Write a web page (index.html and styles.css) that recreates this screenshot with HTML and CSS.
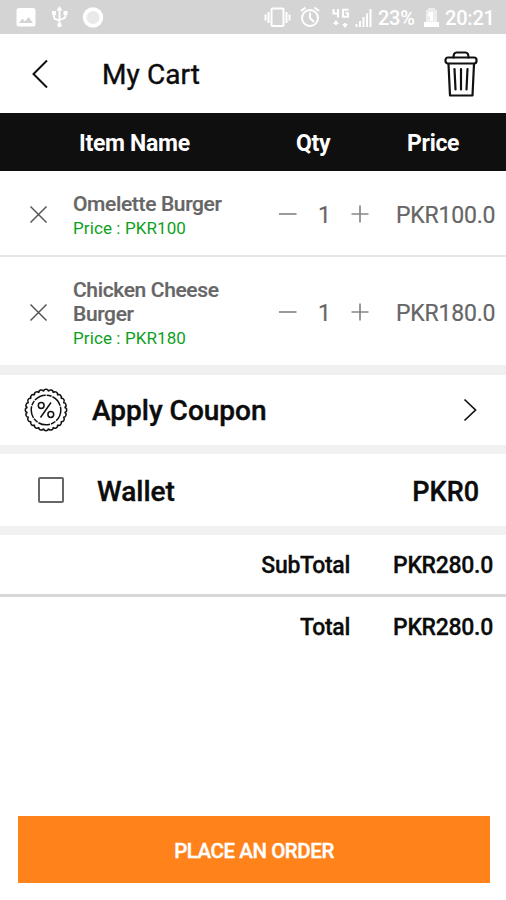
FILE: index.html
```html
<!DOCTYPE html>
<html lang="en">
<head>
<meta charset="utf-8">
<title>My Cart</title>
<link rel="stylesheet" href="styles.css">
</head>
<body>
<div class="status">
  <svg class="status-left" width="110" height="34" viewBox="0 0 110 34">
    <path fill="#fff" fill-rule="evenodd" d="M19 8h14q2.500 0 2.500 2.500v13.500q0 2.500-2.500 2.500h-14q-2.500 0-2.500-2.500v-13.500q0-2.500 2.500-2.500zM19 23h14l-4.500-6-3.500 4.500-2.500-3z"/>
    <g fill="none" stroke="#fff" stroke-width="1.800"><path d="M59.500 9v15M54 13v4q0 2 2.500 2.500l3 1.500M65.500 13v3q0 2-2.500 2.500l-3.500 1.500"/></g>
    <path fill="#fff" d="M59.500 6l3 4.500h-6zM52 11h4v4h-4zM63.500 11h4v4h-4z"/><circle cx="59.500" cy="25" r="2.300" fill="#fff"/>
    <circle cx="93" cy="17.500" r="10.200" fill="#fff"/><circle cx="93" cy="17.500" r="6.500" fill="#e9e9e9"/>
  </svg>
  <div class="status-right">
    <svg width="112" height="34" viewBox="264 0 112 34" fill="none" stroke="#fff" stroke-width="2">
      <rect x="271.500" y="8.500" width="12" height="17.500" rx="1"/><path d="M268.500 12v11M265.500 14.500v6M286.500 12v11M289.500 14.500v6"/>
      <circle cx="310" cy="18" r="8"/><path d="M310 12.500v5.500l4 4M301 11l4.500-3.500M319 11l-4.500-3.500"/>
      <path stroke-width="2" d="M333.500 9v4.500h5.500M338 9v8.500M348.500 9.800h-5.500v7h5v-3.500h-2.500M336 21v4M345 23v4"/>
      <path fill="#fff" stroke="none" d="M333 24l3-4 3 4zM342 24l3 4 3-4z"/>
      <path stroke-width="2" d="M356.500 24v3M360 21v6M363.500 17v10M367 13.500v13.500M370.500 9v18"/>
    </svg>
    <span class="battery">23%</span>
    <svg class="cell" width="15" height="20" viewBox="0 0 15 20"><path fill="#ededed" d="M4 0h7v2h2v17H2V2h2z"/><path fill="#fff" d="M0 14h15v5H0zM5 4h4v9H6V8H4z"/></svg>
    <span class="clock">20:21</span>
  </div>
</div>

<header class="bar">
  <svg class="back" width="18" height="30" viewBox="0 0 18 30" fill="none" stroke="#111" stroke-width="2"><path d="M16 1.500L2.500 15l13.500 13.500"/></svg>
  <h1>My Cart</h1>
  <svg class="trash" width="34" height="46" viewBox="0 0 34 46" fill="none" stroke="#111" stroke-width="2.200" stroke-linejoin="round" stroke-linecap="round">
    <path d="M9.500 6.500q0-5 3-5h9q3 0 3 5"/><rect x="1.500" y="6.500" width="31" height="6" rx="2.500"/><path d="M4.500 13l1.500 31.500h22.500L30 13"/><path d="M10.500 18l1 20.500M17 18v20.500M23.500 18l-1 20.500"/>
  </svg>
</header>

<div class="line head"><span class="h-name">Item Name</span><span class="h-qty">Qty</span><span class="h-price">Price</span></div>

<div class="line item first">
  <svg class="remove" width="19" height="19" viewBox="0 0 19 19"><path d="M1.500 1.500l16 16M17.500 1.500l-16 16"/></svg>
  <div class="info"><div class="name">Omelette Burger</div><div class="unit">Price : PKR100</div></div>
  <svg class="step" width="18" height="18" viewBox="0 0 18 18"><path d="M0 9h17.500"/></svg>
  <span class="qty">1</span>
  <svg class="step" width="18" height="18" viewBox="0 0 18 18"><path d="M.5 9h17M9 .5v17"/></svg>
  <span class="price">PKR100.0</span>
</div>
<div class="line item second">
  <svg class="remove" width="19" height="19" viewBox="0 0 19 19"><path d="M1.500 1.500l16 16M17.500 1.500l-16 16"/></svg>
  <div class="info"><div class="name">Chicken Cheese Burger</div><div class="unit">Price : PKR180</div></div>
  <svg class="step" width="18" height="18" viewBox="0 0 18 18"><path d="M0 9h17.500"/></svg>
  <span class="qty">1</span>
  <svg class="step" width="18" height="18" viewBox="0 0 18 18"><path d="M.5 9h17M9 .5v17"/></svg>
  <span class="price">PKR180.0</span>
</div>

<div class="coupon">
  <svg width="44" height="44" viewBox="-22 -22 44 44" fill="none" stroke="#111" stroke-width="1.500">
    <defs>
      <path id="tooth" d="M-2.500-18.600a2.550 2.600 0 0 1 5 0"/>
      <g id="quarter"><use href="#tooth"/><use href="#tooth" transform="rotate(15)"/><use href="#tooth" transform="rotate(30)"/><use href="#tooth" transform="rotate(45)"/><use href="#tooth" transform="rotate(60)"/><use href="#tooth" transform="rotate(75)"/></g>
    </defs>
    <use href="#quarter"/><use href="#quarter" transform="rotate(90)"/><use href="#quarter" transform="rotate(180)"/><use href="#quarter" transform="rotate(270)"/>
    <circle r="14.800" stroke-dasharray="12 1 5 1"/>
    <circle cx="-4.800" cy="-4.500" r="2.900"/><circle cx="4.800" cy="4.500" r="2.900"/><path d="M5-7.500L-5.500 7.500"/>
  </svg>
  <span>Apply Coupon</span>
  <svg class="next" width="14" height="24" viewBox="0 0 14 24" fill="none" stroke="#111" stroke-width="1.700"><path d="M1.500 1.500L12.500 12l-11 10.500"/></svg>
</div>

<div class="wallet"><i class="box"></i><span>Wallet</span><span class="amount">PKR0</span></div>

<div class="sum sub"><span>SubTotal</span><span class="sum-value">PKR280.0</span></div>
<div class="sum total"><span>Total</span><span class="sum-value">PKR280.0</span></div>

<button class="order">PLACE AN ORDER</button>
</body>
</html>
```

FILE: styles.css
```css
* { box-sizing: border-box; }
body { margin: 0; width: 506px; height: 900px; display: flex; flex-direction: column; background: #fff; font-family: Roboto, "Liberation Sans", sans-serif; color: #0c0c0c; overflow: hidden; }
body > * { flex-shrink: 0; }
svg { display: block; flex: none; }
span { white-space: nowrap; }

.status { height: 34px; background: #d4d4d4; display: flex; justify-content: space-between; color: #fff; }
.status-right { display: flex; align-items: center; width: 242px; padding-top: 2px; font-size: 20px; font-weight: 500; line-height: 34px; }
.status-right svg:first-child { margin-top: -2px; }
.battery { width: 48px; padding-left: 2px; font-size: 20px; letter-spacing: -.3px; }
.cell { margin: 0 6px 0 0; }
.clock { letter-spacing: -.2px; }

.bar { height: 79px; display: flex; align-items: center; padding: 0 28px 0 31px; }
h1 { margin: 3px auto 0 53px; font-size: 28px; line-height: 32px; font-weight: 400; letter-spacing: .1px; -webkit-text-stroke: .4px #0c0c0c; }

.line { display: grid; align-items: center; }
.head { height: 58px; background: #0f0f0f; color: #fff; grid-template-columns: 217px 111px 1fr; padding-left: 79px; padding-top: 2px; font-size: 23px; font-weight: 700; letter-spacing: -.3px; }
.item { grid-template-columns: 44px 206px 39px 33px 45px 1fr; padding-left: 29px; padding-top: 2px; color: #666; }
.first { height: 86px; border-bottom: 2px solid #e6e6e6; }
.second { height: 118px; border-bottom: 10px solid #f0f0f0; }
.remove path { fill: none; stroke: #555; stroke-width: 1.500; }
.step path { fill: none; stroke: #888; stroke-width: 1.700; }
.info { width: 165px; padding-top: 4px; }
.name { font-size: 21px; line-height: 24px; font-weight: 500; letter-spacing: -.35px; -webkit-text-stroke: .2px #666; }
.unit { color: #0ca01c; font-size: 17px; line-height: 25px; letter-spacing: .1px; }
.qty, .price { font-size: 23px; padding-top: 2px; letter-spacing: -.2px; -webkit-text-stroke: .2px #666; }

.coupon { height: 79px; border-bottom: 9px solid #f1f1f1; display: flex; align-items: center; padding: 0 29px 0 24px; font-size: 28px; font-weight: 500; -webkit-text-stroke: .4px #0c0c0c; }
.coupon span { margin: 1px auto 0 24px; }
.wallet { height: 81px; border-bottom: 9px solid #f1f1f1; display: flex; align-items: center; padding: 0 27px 0 38px; font-size: 28px; font-weight: 500; -webkit-text-stroke: .4px #0c0c0c; }
.wallet span { padding-top: 2px; }
.box { width: 26px; height: 26px; border: 2px solid #666; border-radius: 2px; margin-right: 33px; }
.wallet .amount { margin-left: auto; font-size: 27px; padding-top: 3px; }

.sum { display: flex; justify-content: flex-end; align-items: center; padding-right: 13px; font-size: 23px; font-weight: 500; letter-spacing: -.3px; -webkit-text-stroke: .3px #0c0c0c; }
.sum-value { width: 100px; margin-left: 43px; }
.sub { height: 62px; padding-top: 2px; border-bottom: 3px solid #d8d8d8; }
.total { height: 60px; }

.order { width: 472px; height: 67px; margin: auto 0 17px 18px; padding: 3px 0 0; border: 0; background: #ff821b; color: #fff; font: 500 20.5px Roboto, "Liberation Sans", sans-serif; letter-spacing: -.45px; -webkit-text-stroke: .4px #fff; }
```
